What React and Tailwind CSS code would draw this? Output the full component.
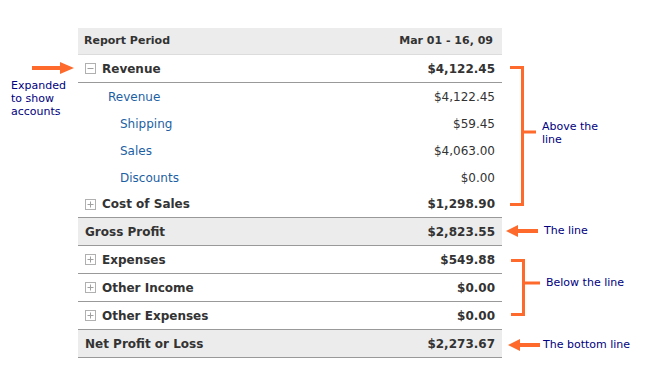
import React from "react";

const Box = ({ minus }) => (
  <svg width="11" height="11" viewBox="0 0 11 11" className="mr-[6px] shrink-0">
    <rect x="0.5" y="0.5" width="10" height="10" fill="white" stroke="#b0b0b0" />
    <line x1="2.5" y1="5.5" x2="8.5" y2="5.5" stroke="#a0a0a0" />
    {!minus && <line x1="5.5" y1="2.5" x2="5.5" y2="8.5" stroke="#a0a0a0" />}
  </svg>
);

const Group = ({ label, amount, minus, h = "h-[28px]" }) => (
  <div
    className={`flex items-center justify-between ${h} pl-[7px] pr-[7px] text-[12px] font-bold text-[#333] border-b border-[#999]`}
  >
    <div className="flex items-center">
      <Box minus={minus} />
      <span>{label}</span>
    </div>
    <span>{amount}</span>
  </div>
);

const Account = ({ label, amount, indent }) => (
  <div className="flex items-center justify-between h-[27px] pr-[7px] text-[12px]">
    <span className={`text-[#1d5fa3] ${indent}`}>{label}</span>
    <span className="text-[#333]">{amount}</span>
  </div>
);

const Total = ({ label, amount }) => (
  <div className="flex items-center justify-between h-[28px] px-[7px] bg-[#ececec] border-b border-[#999] text-[12px] font-bold text-[#333]">
    <span>{label}</span>
    <span>{amount}</span>
  </div>
);

const Arrow = ({ className }) => (
  <svg width="32" height="12" viewBox="0 0 32 12" className={`absolute ${className}`}>
    <polygon points="0,6 12,0 12,4 32,4 32,8 12,8 12,12" fill="#fd6a2c" />
  </svg>
);

const Bracket = ({ className, height, mid, tick }) => (
  <svg width="30" height={height} className={`absolute ${className}`}>
    <path
      d={`M0 1.5 H12.5 V${height - 1.5} H0 M12.5 ${mid} H${12 + tick}`}
      fill="none"
      stroke="#fd6a2c"
      strokeWidth="3"
    />
  </svg>
);

export default function App() {
  return (
    <div className="relative w-[649px] h-[381px] bg-white font-['DejaVu_Sans',Verdana,sans-serif] overflow-hidden">
      <div className="ml-[78px] pt-[28px] w-[424px]">
        <div className="flex items-center justify-between h-[27px] pl-[6px] pr-[9px] bg-[#ececec] border-b border-[#dcdcdc] text-[11px] font-bold text-[#333]">
          <span>Report Period</span>
          <span>Mar 01 - 16, 09</span>
        </div>
        <Group label="Revenue" amount="$4,122.45" minus />
        <Account label="Revenue" amount="$4,122.45" indent="pl-[30px]" />
        <Account label="Shipping" amount="$59.45" indent="pl-[42px]" />
        <Account label="Sales" amount="$4,063.00" indent="pl-[42px]" />
        <Account label="Discounts" amount="$0.00" indent="pl-[42px]" />
        <Group label="Cost of Sales" amount="$1,298.90" h="h-[27px]" />
        <Total label="Gross Profit" amount="$2,823.55" />
        <Group label="Expenses" amount="$549.88" />
        <Group label="Other Income" amount="$0.00" />
        <Group label="Other Expenses" amount="$0.00" />
        <Total label="Net Profit or Loss" amount="$2,273.67" />
      </div>

      {/* annotations */}
      <svg width="42" height="12" viewBox="0 0 42 12" className="absolute left-[32px] top-[62px]">
        <polygon points="42,6 28,0 28,4 0,4 0,8 28,8 28,12" fill="#fd6a2c" />
      </svg>
      <div className="absolute left-[11px] top-[79px] text-[11px] leading-[13px] text-[#000080]">
        Expanded
        <br />
        to show
        <br />
        accounts
      </div>

      <Bracket className="left-[510px] top-[66px]" height={140} mid={66} tick={14} />
      <div className="absolute left-[542px] top-[120px] text-[11px] leading-[13px] text-[#000080]">
        Above the
        <br />
        line
      </div>

      <Arrow className="left-[506px] top-[225px]" />
      <div className="absolute left-[544px] top-[224px] text-[11px] leading-[13px] text-[#000080]">The line</div>

      <Bracket className="left-[511px] top-[259px]" height={57} mid={24} tick={17} />
      <div className="absolute left-[546px] top-[276px] text-[11px] leading-[13px] text-[#000080]">Below the line</div>

      <Arrow className="left-[508px] top-[339px]" />
      <div className="absolute left-[543px] top-[338px] text-[11px] leading-[13px] text-[#000080]">The bottom line</div>
    </div>
  );
}
